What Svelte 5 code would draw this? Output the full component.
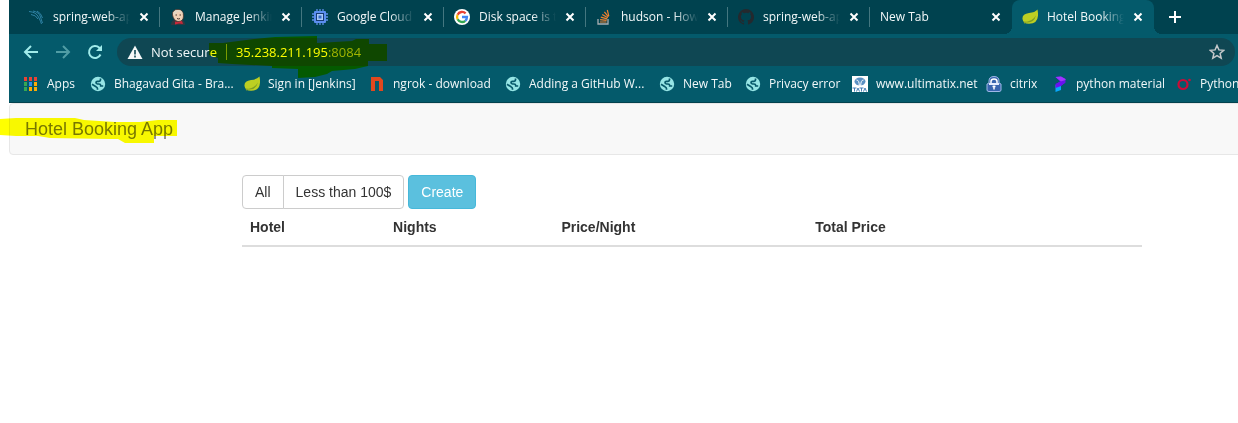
<script>
  const tabs = [
    { title: 'spring-web-app', icon: 'wing' },
    { title: 'Manage Jenkins', icon: 'jenkins' },
    { title: 'Google Cloud Pl', icon: 'chip' },
    { title: 'Disk space is too', icon: 'google' },
    { title: 'hudson - How t', icon: 'stack' },
    { title: 'spring-web-app', icon: 'github' },
    { title: 'New Tab', icon: null },
    { title: 'Hotel Booking', icon: 'leaf', active: true },
  ];
  const bookmarks = [
    { title: 'Apps', icon: 'apps', width: 67 },
    { title: 'Bhagavad Gita - Bra...', icon: 'globe', width: 154 },
    { title: 'Sign in [Jenkins]', icon: 'leaf', width: 125 },
    { title: 'ngrok - download', icon: 'ngrok', width: 136 },
    { title: 'Adding a GitHub W...', icon: 'globe', width: 154 },
    { title: 'New Tab', icon: 'globe', width: 86 },
    { title: 'Privacy error', icon: 'globe', width: 107 },
    { title: 'www.ultimatix.net', icon: 'tata', width: 134 },
    { title: 'citrix', icon: 'lock', width: 66 },
    { title: 'python material', icon: 'pluralsight', width: 124 },
    { title: 'Python', icon: 'ring', width: 70 },
  ];
  const columns = ['Hotel', 'Nights', 'Price/Night', 'Total Price'];
  let address = $state('35.238.211.195:8084');
</script>

{#snippet icon(name)}
  <svg class="icon" viewBox="0 0 16 16" aria-hidden="true">
    {#if name === 'wing'}
      <g fill="none" stroke="#2f83a6" stroke-width="1">
        <path d="M1 2.500Q8 3 10.500 8T13.500 15" />
        <path d="M3 5.500Q8 6 10 10M5 2Q11 3 12.500 8T14.500 14M9 2Q13 4 14.500 9" />
      </g>
    {:else if name === 'jenkins'}
      <path d="M1 16Q1 12 4 11h8q3 1 3 5z" fill="#303840" />
      <path d="M2.500 6Q2 .500 8 .500q5.500 0 5.500 6.500 0 5.500-5.500 5.500-4.500-1-5.500-6.500z" fill="#efd0b5" stroke="#49352f" stroke-width=".8" />
      <path d="M3 6Q3 1 8 1q4 0 5 4-4-3-6-2-1 3-4 3z" fill="#e4d7c4" />
      <path d="M5.500 6h1.500M9.500 6H11M7 9.500q2 1 3 0" stroke="#493832" fill="none" />
      <path d="m5 12.500 3 .5 4-1 1 3-4-.500-4 1z" fill="#c9283a" />
    {:else if name === 'chip'}
      <path d="M5 0v16M8 0v16M11 0v16M0 5h16M0 8h16M0 11h16" stroke="#5c8de8" stroke-width="1.300" />
      <rect x="2" y="2" width="12" height="12" rx="1" fill="#5b8ef0" />
      <rect x="4" y="4" width="8" height="8" fill="#173b73" />
      <rect x="5" y="5" width="6" height="6" fill="#a8c8fa" />
      <rect x="6.500" y="6.500" width="3" height="3" fill="#346ac8" />
    {:else if name === 'google'}
      <circle cx="8" cy="8" r="8" fill="#fff" />
      <g fill="none" stroke-width="2.300">
        <path d="M11.600 4.400A5 5 0 0 0 3.600 5.700" stroke="#ea4335" />
        <path d="M3.600 5.700a5 5 0 0 0 0 4.600" stroke="#fbbc05" />
        <path d="M3.600 10.300a5 5 0 0 0 7.700 1.500" stroke="#34a853" />
        <path d="M11.300 11.800A5 5 0 0 0 13 8H8" stroke="#4285f4" />
      </g>
    {:else if name === 'stack'}
      <path d="M2 10v5h10v-5" fill="none" stroke="#a8afb2" stroke-width="1.300" />
      <path d="M4 13h6.500M4.100 10.700l6.500.700M4.800 8.200l6.300 1.700M6.200 5.400l5.600 3.300M8.400 2.900l4 5M11.300 1l1.500 6.200" stroke="#ee8130" stroke-width="1.200" />
    {:else if name === 'github'}
      <path fill="#24292e" d="M8 0a8 8 0 0 0-2.530 15.590c.4.070.55-.17.55-.380v-1.490c-2.230.480-2.700-.940-2.700-.940-.360-.920-.890-1.170-.890-1.170-.730-.500.060-.490.060-.490.800.060 1.230.830 1.230.830.710 1.220 1.870.870 2.330.660.070-.520.280-.870.510-1.070-1.780-.200-3.640-.890-3.640-3.950 0-.870.310-1.590.820-2.150-.080-.200-.360-1.020.080-2.120 0 0 .670-.210 2.200.820A7.600 7.600 0 0 1 8 3.870c.680 0 1.360.090 2 .270 1.530-1.040 2.200-.820 2.200-.820.440 1.100.160 1.920.080 2.120.510.560.820 1.270.820 2.150 0 3.070-1.870 3.750-3.650 3.950.290.250.540.730.540 1.480v2.190c0 .210.150.460.550.380A8 8 0 0 0 8 0z" />
    {:else if name === 'leaf'}
      <path d="M15.500 .500Q13 3.500 7 4 0 5 .500 10q.5 4.500 6.500 4.800 8.500 0 9-8Q16.200 4 15.500 .500z" fill="#bdcf22" />
      <path d="M2 13Q10 13 14 6.500 11.500 15.500 2 13z" fill="#7f9f24" />
      <circle cx="2.800" cy="13.500" r="1" fill="#8ba42a" />
    {:else if name === 'apps'}
      {#each [[1, 1, '#ea4335'], [6, 1, '#ea4335'], [11, 1, '#ea4335'], [1, 6, '#34a853'], [6, 6, '#2f8cf0'], [11, 6, '#fbab05'], [1, 11, '#34a853'], [6, 11, '#fbab05'], [11, 11, '#fbab05']] as [x, y, color]}
        <rect {x} {y} width="3" height="4" fill={color} />
      {/each}
    {:else if name === 'globe'}
      <circle cx="8" cy="8" r="7.200" fill="#96e5e5" />
      <path d="M10.500 2.500V4q0 1.300-1.500 1.300H7.500q-1.500 0-1.500 1.300T7.500 8H9q1.700 0 1.700 1.500V10h2.500M2 8.200l4 2.600q1.500.7 1.500 2v1" fill="none" stroke="#075a6b" stroke-width="1.700" />
    {:else if name === 'ngrok'}
      <path d="M2 1h9l3 3v11h-4V5H6v10H2z" fill="#e1481e" />
    {:else if name === 'tata'}
      <rect width="16" height="16" fill="#fff" />
      <ellipse cx="8" cy="5.500" rx="5.500" ry="4" fill="#5b91c4" />
      <path d="M7.300 10Q7.300 4 4.500 4M8.700 10Q8.700 4 11.500 4" fill="none" stroke="#fff" stroke-width="1" />
      <path d="M.500 12h4M2.500 12v3.500M4.500 15.500l1.500-3.500 1.500 3.500M7.500 12h4M9.500 12v3.500M11.500 15.500l1.500-3.500 1.500 3.500" fill="none" stroke="#467fb6" stroke-width="1" />
    {:else if name === 'lock'}
      <path d="M3 7V5Q3 .500 8 .500T13 5v2l2 1v6q0 1.500-2 1.500H3Q1 15.500 1 14V8z" fill="#3764ae" stroke="#9fb8e6" />
      <path d="M5 7V5.500Q5 3 8 3t3 2.500V7" fill="none" stroke="#fff" stroke-width="1.500" />
      <path d="M3 7h10v2H3z" fill="#e3ecff" />
      <path d="M8 9.500v4M6.500 10.500h3" stroke="#fff" stroke-width="1.500" />
    {:else if name === 'pluralsight'}
      <path d="M3.500 1 9 .500 13.500 3v3.500L9 9.500 4 12V8l4-2.500z" fill="#6816e8" />
      <path d="M3.500 1 9 .500 13.500 3v1L9 5.500z" fill="#a035ff" />
      <path d="M3.500 9 9 7.500V14l-5.500 2z" fill="#08a7fc" />
      <path d="m3.500 8 5-2.500 5 1L9 10l-5.500 2z" fill="#6a10f0" />
    {:else if name === 'ring'}
      <circle cx="7" cy="8.500" r="4.500" fill="none" stroke="#cc0b36" stroke-width="2.200" />
      <circle cx="13.500" cy="4" r="1.300" fill="#cc0b36" />
    {/if}
  </svg>
{/snippet}

<div class="screen">
  <header class="browser">
    <nav class="tabs" aria-label="Tabs">
      {#each tabs as tab}
        <div class="tab" class:active={tab.active} class:plain={!tab.icon}>
          {#if tab.icon}{@render icon(tab.icon)}{/if}
          <a href="#tab" class="title">{tab.title}</a>
          <button class="close" aria-label="Close tab">
            <svg viewBox="0 0 10 10"><path d="m1.500 1.500 7 7m0-7-7 7" /></svg>
          </button>
        </div>
      {/each}
      <button class="new-tab" aria-label="New tab">
        <svg viewBox="0 0 14 14"><path d="M7 1v12M1 7h12" /></svg>
      </button>
    </nav>

    <div class="toolbar">
      <button aria-label="Back">
        <svg viewBox="0 0 16 16"><path d="M15 8H2m6-6L2 8l6 6" /></svg>
      </button>
      <button class="dim" aria-label="Forward">
        <svg viewBox="0 0 16 16"><path d="M1 8h13M8 2l6 6-6 6" /></svg>
      </button>
      <button aria-label="Reload">
        <svg viewBox="0 0 16 16"><path d="M13.500 10.500A6 6 0 1 1 12.300 3.800l1.200 1.500" /><path class="solid" d="M15 1v6H9z" /></svg>
      </button>
      <div class="omnibox">
        <svg class="warning" viewBox="0 0 16 16" aria-hidden="true">
          <path d="M8 1.500 15.500 15H.500z" fill="#f4f8f8" /><path d="M8 6v4.500M8 11.500v2" stroke="#0f4753" stroke-width="1.600" />
        </svg>
        <span class="security">Not secure</span>
        <label class="address">
          <span class="shown">{address.split(':')[0]}<span class="port">:{address.split(':')[1] ?? ''}</span></span>
          <input aria-label="Address" bind:value={address} />
        </label>
        <button class="star" aria-label="Bookmark this page">
          <svg viewBox="0 0 16 16"><path d="m8 1.500 1.900 4.400 4.800.400-3.600 3.100 1.100 4.700L8 11.600l-4.200 2.500 1.100-4.700-3.600-3.100 4.800-.4z" /></svg>
        </button>
      </div>
    </div>

    <nav class="bookmarks" aria-label="Bookmarks">
      {#each bookmarks as mark}
        <a href="#bookmark" style:width="{mark.width}px">{@render icon(mark.icon)}<span>{mark.title}</span></a>
      {/each}
    </nav>
  </header>

  <div class="page">
    <nav class="navbar"><a href="#home">Hotel Booking App</a></nav>
    <main>
      <div class="actions">
        <div class="group"><button>All</button><button>Less than 100$</button></div>
        <button class="create">Create</button>
      </div>
      <table>
        <thead>
          <tr>{#each columns as column}<th scope="col">{column}</th>{/each}</tr>
        </thead>
      </table>
    </main>
  </div>

  <svg class="marker" width="400" height="150" aria-hidden="true">
    <path d="M209 43h14l31-4 21-2 42-1v7l35-2 4-2h13v5h18v17h-19v5l-13 3-23 2-5 3-12 3-17 1v-9l-26-1v-2l-40-2-14-1v-5l-9-3z" />
    <path d="M0 119l16-1h59l9 2 31 2h25l18-2h19v16h-23v7h-29l-7-4h-9l-59-1-12-2H16l-16-1z" />
  </svg>
</div>

<style>
  :global(body) { background: #fff; overflow-x: hidden; }
  .screen { position: relative; padding-left: 9px; overflow: hidden; isolation: isolate; background: #fff; font-family: "Liberation Sans", Arial, sans-serif; }
  button { font: inherit; border: 0; padding: 0; background: none; cursor: pointer; }
  a { color: inherit; text-decoration: none; }
  svg { display: block; flex: none; }
  .icon { width: 16px; height: 16px; }

  .browser { background: #045a6b; color: #f2f8f9; border-bottom: 1px solid #03424e; font: 12px/16px "Open Sans", "Noto Sans", sans-serif; }
  .tabs { display: flex; height: 34px; padding-left: 9px; background: #00424f; }
  .tab { position: relative; box-sizing: border-box; display: flex; align-items: center; flex: 0 0 142px; min-width: 0; padding: 0 11px 0 10px; gap: 9px; }
  .tab:not(.active)::after { content: ""; position: absolute; right: 0; top: 7px; width: 1px; height: 20px; background: #447780; }
  .tab.plain::after { display: none; }
  .title { flex: 1; min-width: 0; overflow: hidden; white-space: nowrap; mask-image: linear-gradient(to right, #000 calc(100% - 24px), transparent); }
  .plain .title { mask-image: none; }
  .close svg { width: 10px; height: 10px; }
  .close path, .new-tab path { fill: none; stroke: #fff; stroke-width: 2; }
  .tab .close { flex: none; }
  .active { background: #045a6b; border-radius: 8px 8px 0 0; }
  .active::before { content: ""; position: absolute; left: -8px; right: -8px; bottom: 0; height: 8px; background: radial-gradient(circle at 0 0, transparent 8px, #045a6b 8px) left / 8px 8px no-repeat, radial-gradient(circle at 100% 0, transparent 8px, #045a6b 8px) right / 8px 8px no-repeat; }
  .new-tab { margin-left: 14px; }
  .new-tab svg { width: 14px; height: 14px; }

  .toolbar { display: flex; align-items: center; gap: 16px; padding: 4px 3px 4px 14px; }
  .toolbar > button svg { width: 16px; height: 16px; }
  .toolbar > button path { fill: none; stroke: #a1ebea; stroke-width: 2; }
  .toolbar > button .solid { fill: #a1ebea; stroke: none; }
  .toolbar > .dim path { stroke: #519da5; }
  .omnibox { flex: 1; min-width: 0; display: flex; align-items: center; height: 28px; padding: 0 10px; border-radius: 14px; background: #0f4753; font-size: 13px; }
  .toolbar > .omnibox { margin-left: -2px; }
  .warning { width: 16px; height: 16px; margin-right: 8px; }
  .security { white-space: nowrap; }
  .address { position: relative; flex: 1; margin-left: 9px; padding-left: 9px; border-left: 1px solid #7a9ca3; }
  .shown { display: block; color: #fff; }
  .port { color: #a0b4ba; }
  .address input { position: absolute; inset: 0; width: 100%; box-sizing: border-box; padding: 0 9px; border: 0; outline: 0; background: none; color: transparent; caret-color: #fff; font: inherit; }
  .star svg { width: 16px; height: 16px; }
  .star path { fill: none; stroke: #c5c9cb; stroke-width: 1.5; }

  .bookmarks { display: flex; height: 32px; padding-left: 14px; overflow: hidden; }
  .bookmarks a { display: flex; flex: none; align-items: center; gap: 8px; padding-bottom: 4px; box-sizing: border-box; height: 32px; white-space: nowrap; }

  .page { color: #333; font-size: 14px; line-height: 20px; }
  .navbar { height: 50px; margin-right: -4px; border: 1px solid #e7e7e7; border-radius: 4px; background: #f8f8f8; }
  .navbar a { display: inline-block; padding: 15px; color: #777; font-size: 18px; }
  main { margin: 20px 96px 0 233px; }
  .actions { display: flex; gap: 4px; }
  .actions button { padding: 6px 12px; border: 1px solid #ccc; border-radius: 4px; background: #fff; color: #333; }
  .group { display: flex; }
  .group button:first-child { border-radius: 4px 0 0 4px; }
  .group button:last-child { border-radius: 0 4px 4px 0; margin-left: -1px; }
  .actions .create { border-color: #46b8da; background: #5bc0de; color: #fff; }
  table { width: 100%; border-collapse: separate; border-spacing: 0; table-layout: fixed; }
  th { box-sizing: border-box; padding: 8px; text-align: left; border-bottom: 2px solid #ddd; }
  th:nth-child(1) { width: 15.9%; }
  th:nth-child(2) { width: 18.7%; }
  th:nth-child(3) { width: 28.2%; }

  .marker { position: absolute; left: 0; top: 0; fill: #ff0; mix-blend-mode: multiply; pointer-events: none; }
</style>
